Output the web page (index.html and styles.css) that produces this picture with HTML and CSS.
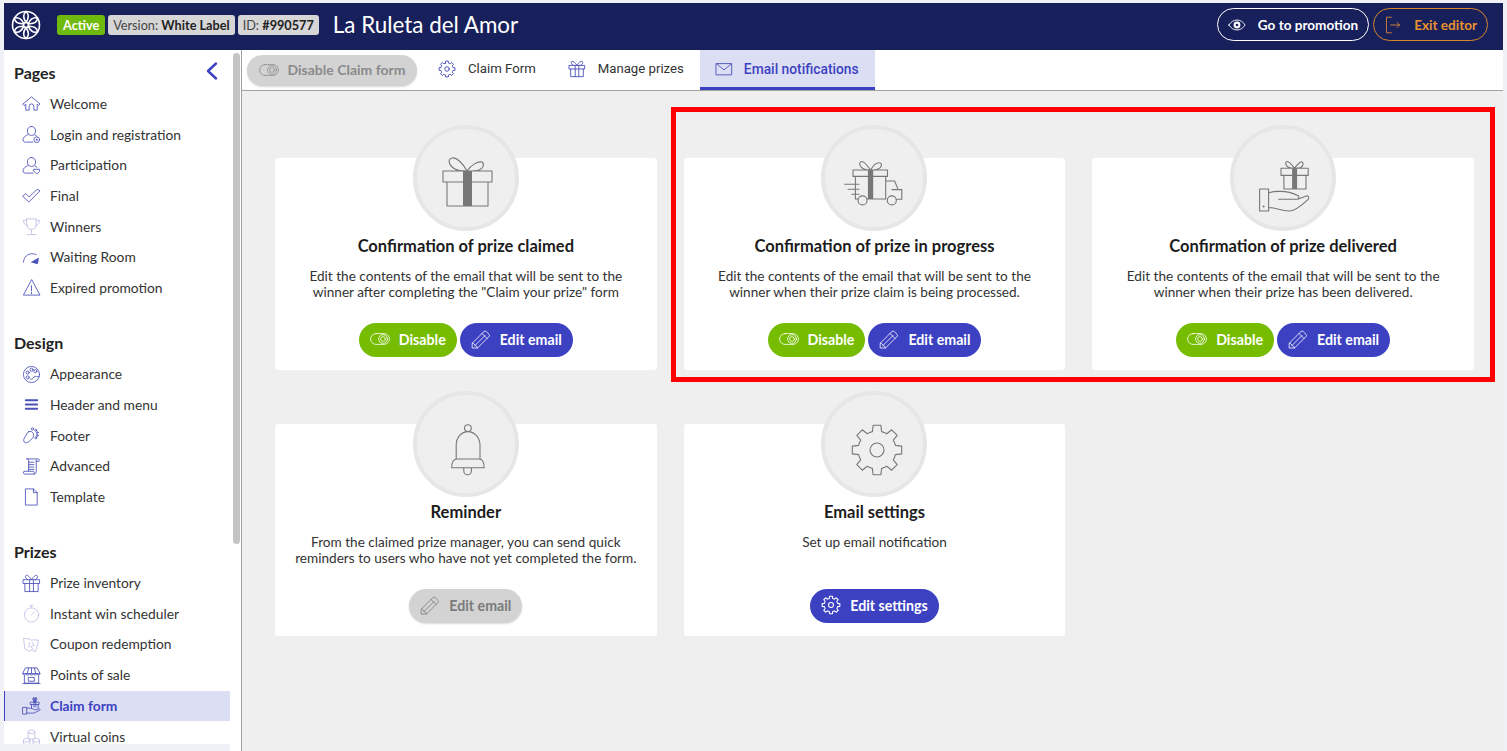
FILE: index.html
```html
<!DOCTYPE html>
<html lang="en">
<head>
  <meta charset="UTF-8">
  <meta name="viewport" content="width=device-width, initial-scale=1.0">
  <title>La Ruleta del Amor</title>
  <link rel="stylesheet" href="styles.css">
</head>
<body>

<!-- shared icons -->
<svg class="icon-defs" aria-hidden="true">
  <symbol id="i-toggle" viewBox="0 0 20 14">
    <rect x="0.6" y="1.6" width="18.8" height="10.8" rx="5.4"/>
    <circle cx="13" cy="7" r="4.4"/>
    <circle cx="13" cy="7" r="2.4"/>
  </symbol>
  <symbol id="i-pencil" viewBox="0 0 20 20">
    <path d="M1.5 14 13 2.5a1.6 1.6 0 0 1 2.2 0l2.8 2.8a1.6 1.6 0 0 1 0 2.2L6.5 19H1.5z"/>
    <path d="M1.5 14c2 0 2 2 2.5 2.5S6.5 17 6.5 19M11 4.5l5 5M4 16.5 14 6.5"/>
  </symbol>
  <symbol id="i-gear" viewBox="-28 -28 56 56">
    <path d="M-4.6 -18.4L-3.9 -24.7L3.9 -24.7L4.6 -18.4A19 19 0 0 1 9.8 -16.3L14.7 -20.2L20.2 -14.7L16.3 -9.8A19 19 0 0 1 18.4 -4.6L24.7 -3.9L24.7 3.9L18.4 4.6A19 19 0 0 1 16.3 9.8L20.2 14.7L14.7 20.2L9.8 16.3A19 19 0 0 1 4.6 18.4L3.9 24.7L-3.9 24.7L-4.6 18.4A19 19 0 0 1 -9.8 16.3L-14.7 20.2L-20.2 14.7L-16.3 9.8A19 19 0 0 1 -18.4 4.6L-24.7 3.9L-24.7 -3.9L-18.4 -4.6A19 19 0 0 1 -16.3 -9.8L-20.2 -14.7L-14.7 -20.2L-9.8 -16.3A19 19 0 0 1 -4.6 -18.4Z"/>
    <circle r="7"/>
  </symbol>
  <symbol id="i-gift" viewBox="0 0 20 20">
    <rect x="1.5" y="6" width="17" height="4"/>
    <path d="M3 10v8.5h14V10M8 6v12.5M12 6v12.5M10 6C8 3 6 1 4.5 1.5 3 2 3.5 5 6 6M10 6c2-3 4-5 5.5-4.5C17 2 16.5 5 14 6"/>
  </symbol>
  <symbol id="i-user" viewBox="0 0 20 20">
    <path d="M10 1.5c2.800 0 4.300 2.200 4.300 4.800 0 2.500-1.500 4.700-4.300 4.700S5.700 8.800 5.700 6.300c0-2.600 1.500-4.800 4.300-4.800zM6.500 10C3.500 11.500 1 13 1 15.500S3 18 5 18h6.500M13.500 10.500c.8.400 1.600.9 2.300 1.500"/>
  </symbol>
</svg>

<div class="layout">
  <header class="topbar">
    <svg class="logo" viewBox="0 0 30 30">
      <circle cx="15" cy="15" r="13.5"/>
      <circle cx="15" cy="15" r="2.5"/>
      <path d="M15 12.5C12 8 12 4 15 1.500c3 2.500 3 6.500 0 11zM17.200 13.700c2.400-4.800 5.800-6.800 9.500-5.500-.7 3.900-4 6-9.500 5.500zM17.200 16.300c5.400-.3 8.800 1.700 9.500 5.500-3.700 1.300-7.100-.7-9.500-5.500zM15 17.500c3 4.500 3 8.500 0 11-3-2.500-3-6.500 0-11zM12.800 16.300c-2.400 4.800-5.800 6.800-9.500 5.500.7-3.800 4.100-5.800 9.500-5.500zM12.800 13.700c-5.500.5-8.800-1.600-9.500-5.500 3.700-1.300 7.100.7 9.500 5.500z"/>
    </svg>
    <span class="badge badge-green">Active</span>
    <span class="badge">Version: <b>White Label</b></span>
    <span class="badge">ID: <b>#990577</b></span>
    <h1 class="promo-title">La Ruleta del Amor</h1>
    <a class="top-btn top-btn-white">
      <svg viewBox="0 0 20 14"><path d="M1 7c2.500-3.800 5.500-5.500 9-5.500S16.500 3.200 19 7c-2.500 3.800-5.500 5.500-9 5.500S3.500 10.800 1 7z"/><circle cx="10" cy="7" r="3.8" class="solid"/><circle cx="10" cy="7" r="1.5" class="hole"/></svg>
      Go to promotion
    </a>
    <a class="top-btn top-btn-orange">
      <svg viewBox="0 0 20 22"><path d="M8 1.500H2v19h6M7 11h11M15 8l3 3-3 3"/></svg>
      Exit editor
    </a>
  </header>

  <div class="below">
    <aside class="sidebar">
      <div class="side-head">
        <h2>Pages</h2>
        <svg class="collapse" viewBox="0 0 12 18"><path d="M10 1.500 2 9l8 7.500"/></svg>
      </div>
      <ul class="side-list">
        <li><svg class="ico" viewBox="0 0 20 20"><path d="M1 10.500 10 3l9 7.500-1.500 1.500-1.500-1.200V17h-3.500v-4a2.500 2.500 0 0 0-5 0v4H4v-6.200L2.500 12z"/></svg>Welcome</li>
        <li><svg class="ico" viewBox="0 0 20 20"><use href="#i-user"/><circle cx="15.5" cy="15.5" r="3"/><circle cx="15.5" cy="15.5" r="1" class="solid"/></svg>Login and registration</li>
        <li><svg class="ico" viewBox="0 0 20 20"><use href="#i-user"/><path d="M12.500 14h6v2l-3 3-3-3z"/></svg>Participation</li>
        <li><svg class="ico" viewBox="0 0 20 20"><path d="M1 10.500 4 8l3.500 3.500L16 3.500l3 1.500L7.500 16.500z"/></svg>Final</li>
        <li><svg class="ico ico-faint" viewBox="0 0 20 20"><path d="M5 2h10v6c0 3-2 5-5 5s-5-2-5-5zM5 3.500H1.500c0 3 1.500 5 4 5.500M15 3.500h3.500c0 3-1.500 5-4 5.500M10 13v4M5.500 18.500h9"/></svg>Winners</li>
        <li><svg class="ico" viewBox="0 0 20 20"><path d="M1.500 15C2 9 6 6 11 6c1.500 0 3 .4 4 1"/><path d="M9 15l9-5-1.500 7z" class="solid"/></svg>Waiting Room</li>
        <li><svg class="ico" viewBox="0 0 20 20"><path d="M10 2 1.500 18h17zM10 8v5.500M10 15v1.500"/></svg>Expired promotion</li>
      </ul>

      <div class="side-head"><h2>Design</h2></div>
      <ul class="side-list">
        <li><svg class="ico" viewBox="0 0 20 20"><circle cx="10" cy="10" r="8.5"/><circle cx="6" cy="8" r="1.6"/><circle cx="10" cy="5" r="1.6"/><circle cx="14" cy="6.5" r="1.6"/><circle cx="6" cy="13" r="1.6"/><path d="M9 15c3 1 3-3 5-3s2 1 4 0"/></svg>Appearance</li>
        <li><svg class="ico ico-heavy" viewBox="0 0 20 20"><path d="M4 5.500h12M4 10h12M4 14.500h12"/></svg>Header and menu</li>
        <li><svg class="ico" viewBox="0 0 20 20"><path d="M7 6c2-1 4 0 5 2 1 3-1 5-3 7s-5 3.500-6.500 2S2 13 3.500 11 5 7 7 6z"/><circle cx="11" cy="3" r="1.2"/><circle cx="14.5" cy="4.5" r="1"/><circle cx="16" cy="7" r="1"/><circle cx="16" cy="10" r="1"/><circle cx="14.5" cy="12.5" r="1"/></svg>Footer</li>
        <li><svg class="ico" viewBox="0 0 20 20"><path d="M5 2h12c1 0 1.500 1 1 2.500h-3M5 2c1 0 2 .5 2 2v11M15 3v12c0 2-1 3-2 3H3c-1.500 0-2-2-1-3h10c1 0 1 1.500 1 3M7 5.500h5.500M7 8h5.500M7 10.500h5.500M7 13h5.500"/></svg>Advanced</li>
        <li><svg class="ico" viewBox="0 0 20 20"><path d="M4 2h8l4 4v13H4zM12 2v4h4"/></svg>Template</li>
      </ul>

      <div class="side-head"><h2>Prizes</h2></div>
      <ul class="side-list">
        <li><svg class="ico" viewBox="0 0 20 20"><use href="#i-gift"/></svg>Prize inventory</li>
        <li><svg class="ico ico-faint" viewBox="0 0 20 20"><circle cx="10" cy="11.5" r="7.5"/><path d="M8.500 1.500h3M10 1.500V4M10 11.500l3-3"/></svg>Instant win scheduler</li>
        <li><svg class="ico ico-faint" viewBox="0 0 20 20"><path d="M2 3.500l7 1 1 1.500 1.500-1 6 .5-3 12-5-2-1.500 1.500L3.500 15zM8 8l-1 5M11 8l2 3-4 1 3 3"/></svg>Coupon redemption</li>
        <li><svg class="ico" viewBox="0 0 20 20"><path d="M4 2h12l3 6H1zM1 8c0 2 3 2 3 0 0 2 4 2 4 0 0 2 4 2 4 0 0 2 4 2 4 0 0 2 3 2 3 0M2.500 10v8h15v-8M1 18.500h18M7 2 5.500 8M10 2v6M13 2l1.500 6M7 12h6v4H7z"/></svg>Points of sale</li>
        <li class="active"><svg class="ico" viewBox="0 0 20 20"><path d="M9 6.500h9v2.500H9zM10 9v4M17 9v4M12.500 1.500v10M14.500 1.500v10M13.500 6.500c-2-2-3-4-1.500-4.500s1.500 2 1.500 4.500zm0 0c2-2 3-4 1.500-4.500s-1.500 2-1.500 4.500z"/><path d="M1 12h4v7H1zM5 13c3-1 5 0 7 1s3 0 6-.5c1 0 1.500 1 .5 1.500l-6 3H5"/></svg>Claim form</li>
        <li><svg class="ico ico-faint" viewBox="0 0 20 20"><ellipse cx="10" cy="5" rx="3.5" ry="2"/><path d="M6.500 5v6c0 2 7 2 7 0V5"/><ellipse cx="5" cy="14" rx="3.5" ry="2"/><path d="M1.500 14v3c0 2 7 2 7 0v-3"/><ellipse cx="15" cy="14" rx="3.5" ry="2"/><path d="M11.500 14v3c0 2 7 2 7 0v-3"/></svg>Virtual coins</li>
      </ul>
    </aside>

    <div class="side-scroll"><div class="side-thumb"></div></div>

    <main class="content">
      <nav class="tabs">
        <span class="tab-toggle"><svg class="btn-ico" viewBox="0 0 20 14"><use href="#i-toggle"/></svg>Disable Claim form</span>
        <a class="tab"><svg class="tab-ico gear-small" viewBox="0 0 56 56"><use href="#i-gear"/></svg>Claim Form</a>
        <a class="tab"><svg class="tab-ico" viewBox="0 0 20 20"><use href="#i-gift"/></svg>Manage prizes</a>
        <a class="tab tab-active"><svg class="tab-ico" viewBox="0 0 20 20"><path d="M1.500 4h17v12.500h-17zM1.500 4 10 11l8.500-7"/></svg>Email notifications</a>
      </nav>

      <section class="cards">
        <article class="card">
          <div class="card-circle">
            <svg viewBox="0 0 60 60">
              <path d="M7 23h49v11H7zM11 34v24h41V34M31 23C26 14 20 9 16 10 11 11 13 18 19 21 22 23 27 23 31 23M31 23C35 17 42 13 46 14 49 16 47 21 43 22 40 23 35 23 31 23"/>
              <path d="M27 23h9v35h-9z" class="solid"/>
            </svg>
          </div>
          <h3>Confirmation of prize claimed</h3>
          <p>Edit the contents of the email that will be sent to the winner after completing the "Claim your prize" form</p>
          <div class="card-actions">
            <a class="btn btn-green"><svg class="btn-ico" viewBox="0 0 20 14"><use href="#i-toggle"/></svg>Disable</a>
            <a class="btn btn-blue"><svg class="btn-ico" viewBox="0 0 20 20"><use href="#i-pencil"/></svg>Edit email</a>
          </div>
        </article>

        <article class="card">
          <div class="card-circle">
            <svg viewBox="0 0 60 60">
              <path d="M9 22h34.500v6.400H9zM11.400 28.400V51M41.700 28.400V51M14 51h-2.600M23 51h18.700M41.700 33H50.600L54.200 41.600H57.800V51.300H52.500M26.500 22C23 17 20 13 17.500 13.500 14 14.500 16 19.500 20 21 22 22 24 22 26.500 22M26.500 22C29 18 33 14 36 15 39 16 37 20 34 21 32 22 29 22 26.500 22M.6 36.300H15M4 41.300H15M7.800 46.300H15M48 41.600H54.200"/>
              <path d="M23.900 22h5.300v29h-5.300z" class="solid"/>
              <circle cx="18.5" cy="52.4" r="4.5"/>
              <circle cx="47.8" cy="52.4" r="4.5"/>
            </svg>
          </div>
          <h3>Confirmation of prize in progress</h3>
          <p>Edit the contents of the email that will be sent to the winner when their prize claim is being processed.</p>
          <div class="card-actions">
            <a class="btn btn-green"><svg class="btn-ico" viewBox="0 0 20 14"><use href="#i-toggle"/></svg>Disable</a>
            <a class="btn btn-blue"><svg class="btn-ico" viewBox="0 0 20 20"><use href="#i-pencil"/></svg>Edit email</a>
          </div>
        </article>

        <article class="card">
          <div class="card-circle">
            <svg viewBox="0 0 60 60">
              <path d="M28 20.200h27.200v7.200H28zM30.900 27.400V41H53V27.400M41.500 20.200C39 17 36 13 34 13.500 31.500 14.500 33 18.500 36 19.500 38 20.200 40 20.200 41.500 20.200M41.500 20.200C44 17 47 13 49 14 51 15 50 18.500 47.500 19.500 45.500 20.200 43 20.200 41.500 20.200M6.600 41h9v22h-9zM15.600 45C20 43 24 43.400 27.400 43.400 33 43.400 40 45 45.200 47.700 46.500 49 45.500 51.300 44.500 51.300H25.600M44.500 51.300 54.100 47.700C56 47.700 56 50 55.200 51.300 48 58 42 63 36.300 63 28 63 22 59.500 15.600 59.500"/>
              <path d="M39.100 20.200h5v20.800h-5z" class="solid"/>
              <circle cx="10.6" cy="58.4" r="1" class="solid"/>
            </svg>
          </div>
          <h3>Confirmation of prize delivered</h3>
          <p>Edit the contents of the email that will be sent to the winner when their prize has been delivered.</p>
          <div class="card-actions">
            <a class="btn btn-green"><svg class="btn-ico" viewBox="0 0 20 14"><use href="#i-toggle"/></svg>Disable</a>
            <a class="btn btn-blue"><svg class="btn-ico" viewBox="0 0 20 20"><use href="#i-pencil"/></svg>Edit email</a>
          </div>
        </article>

        <article class="card">
          <div class="card-circle">
            <svg viewBox="0 0 60 60">
              <circle cx="31.9" cy="14.1" r="3.4"/>
              <path d="M20.200 45V31.300C20.200 24 25 17.600 31.900 17.600S44 24 44 31.300V45M20.200 45C17 45.800 15.700 48 15.700 53.800H48.100C48.100 48 47 45.800 44 45zM27.800 53.800V57a3.800 3.800 0 0 0 7.600 0v-3.200"/>
            </svg>
          </div>
          <h3>Reminder</h3>
          <p>From the claimed prize manager, you can send quick reminders to users who have not yet completed the form.</p>
          <div class="card-actions">
            <a class="btn btn-gray"><svg class="btn-ico" viewBox="0 0 20 20"><use href="#i-pencil"/></svg>Edit email</a>
          </div>
        </article>

        <article class="card">
          <div class="card-circle">
            <svg class="gear-big" viewBox="0 0 56 56"><use href="#i-gear"/></svg>
          </div>
          <h3>Email settings</h3>
          <p>Set up email notification</p>
          <div class="card-actions">
            <a class="btn btn-blue"><svg class="btn-ico gear-small" viewBox="0 0 56 56"><use href="#i-gear"/></svg>Edit settings</a>
          </div>
        </article>
      </section>

      <div class="highlight"></div>
    </main>
  </div>
</div>

</body>
</html>
```

FILE: styles.css
```css
* {
  box-sizing: border-box;
}

html, body {
  height: 100%;
}

body {
  font-family: Lato, "Noto Sans", sans-serif;
  background-color: #eff1f6;
  color: #2b2b2b;
  margin: 0;
  overflow: hidden;
}

svg {
  fill: none;
  stroke: currentColor;
  stroke-linejoin: round;
  stroke-linecap: round;
  flex-shrink: 0;
}

svg .solid {
  fill: currentColor;
  stroke: none;
}

.icon-defs {
  position: absolute;
  width: 0;
  height: 0;
}

.layout {
  height: 100%;
  padding: 3px 4px 0;
  display: flex;
  flex-direction: column;
}

/* top bar */
.topbar {
  height: 47px;
  background-color: #18205c;
  color: #fff;
  display: flex;
  align-items: center;
  padding: 0 15px 4px 7px;
  flex-shrink: 0;
}

.logo {
  width: 30px;
  height: 30px;
  margin-right: 16px;
  stroke-width: 1.6;
}

.badge {
  height: 20px;
  line-height: 20px;
  padding: 0 5px;
  margin-right: 3px;
  border-radius: 3px;
  background-color: #d6d6d6;
  color: #444;
  font-size: 12.7px;
}

.badge b {
  color: #222;
}

.badge-green {
  background-color: #6fba0c;
  color: #fff;
  font-weight: 700;
  padding: 0 6px;
}

.promo-title {
  margin: 0 auto 0 11px;
  font-size: 22.4px;
  font-weight: 400;
}

.top-btn {
  height: 33px;
  border-radius: 17px;
  border: 1px solid #fff;
  display: flex;
  align-items: center;
  font-size: 13.55px;
  font-weight: 700;
  padding: 0 10px;
}

.top-btn svg {
  width: 18px;
  height: 18px;
  margin-right: 12px;
}

.top-btn .hole {
  fill: #18205c;
  stroke: none;
}

.top-btn-white {
  color: #fff;
  margin-right: 4px;
}

.top-btn-white svg .solid {
  fill: #fff;
}

.top-btn-orange {
  color: #e8912f;
  border-color: #d5862c;
}

.below {
  flex: 1;
  display: flex;
  min-height: 0;
}

/* left menu */
.sidebar {
  width: 226px;
  height: 694px;
  padding-top: 8.5px;
  background-color: #fff;
  overflow: hidden;
  flex-shrink: 0;
}

.side-head {
  height: 30px;
  padding: 0 12px 2px 10px;
  display: flex;
  align-items: center;
  justify-content: space-between;
}

.side-head h2 {
  margin: 0;
  font-size: 16px;
  font-weight: 700;
  color: #222;
}

.collapse {
  width: 12px;
  height: 18px;
  margin-bottom: 4px;
  color: #3c41c2;
  stroke-width: 2.4;
}

.side-list {
  list-style: none;
  margin: 0 0 25.5px;
  padding: 0;
}

.side-list li {
  height: 30.7px;
  line-height: 14px;
  display: flex;
  align-items: center;
  padding-left: 18px;
  font-size: 13.8px;
  color: #333;
}

.side-list li.active {
  background-color: #dcdff3;
  border-left: 1px solid #3c41c2;
  padding-left: 17px;
  color: #3c41c2;
  font-weight: 700;
}

.ico {
  width: 19px;
  height: 19px;
  margin-right: 9px;
  color: #4a50b8;
  stroke-width: 0.9;
}

.ico-faint {
  opacity: 0.35;
}

.ico-heavy {
  stroke-width: 2;
}

.side-scroll {
  width: 11px;
  flex-shrink: 0;
  background-color: #fff;
  padding: 3px 1px 0 3px;
}

.side-thumb {
  height: 491px;
  background-color: #c4c4c4;
  border-radius: 4px;
}

/* main area */
.content {
  flex: 1;
  position: relative;
  background-color: #efefef;
  border-left: 1px solid #a0a0a0;
  min-width: 0;
}

.tabs {
  height: 41px;
  background-color: #fff;
  border-bottom: 1px solid #a0a0a0;
  display: flex;
  align-items: stretch;
  padding-left: 5px;
}

.tab-toggle {
  width: 170px;
  height: 31px;
  margin: 5px 5px 0 0;
  padding-bottom: 2px;
  border-radius: 16px;
  background-color: #d3d3d3;
  color: #8a8a8a;
  box-shadow: 0 1px 2px rgba(0, 0, 0, 0.15);
  display: flex;
  align-items: center;
  justify-content: center;
  font-size: 14px;
  font-weight: 700;
}

.tab-toggle .btn-ico {
  margin-right: 9px;
}

.tab {
  display: flex;
  align-items: center;
  padding: 0 16px 3px;
  font-family: Roboto, sans-serif;
  font-size: 13.2px;
  color: #333;
}

.tab-ico {
  width: 18px;
  height: 18px;
  margin-right: 12px;
  color: #4a50b8;
  stroke-width: 1;
}

.tab-active {
  background-color: #dcdff3;
  border-bottom: 3px solid #3c41c2;
  padding: 0 16px 0 15px;
  color: #3c41c2;
  font-size: 13.8px;
  font-weight: 500;
}

.tab-active .tab-ico {
  margin-right: 11px;
}

.cards {
  display: grid;
  grid-template-columns: repeat(3, 1fr);
  grid-auto-rows: 212px;
  gap: 54px 27px;
  padding: 67px 29px 0 33px;
}

.card {
  background-color: #fff;
  border-radius: 3px;
  padding: 0 13px 13px;
  display: flex;
  flex-direction: column;
  align-items: center;
  text-align: center;
}

.card-circle {
  width: 106px;
  height: 106px;
  margin-top: -33px;
  border-radius: 50%;
  border: 4px solid #e5e6e8;
  background-color: #efefef;
  color: #777;
  display: flex;
  align-items: center;
  justify-content: center;
  flex-shrink: 0;
}

.card-circle svg {
  width: 60px;
  height: 60px;
  stroke-width: 1.1;
  overflow: visible;
}

.card-circle .gear-big {
  width: 56px;
  height: 56px;
  margin: 11px 0 0 5px;
}

.card h3 {
  margin: 5px 0 0;
  font-size: 16.5px;
  line-height: 20px;
  font-weight: 700;
  color: #1c1c1c;
}

.card p {
  margin: 12px 0 0;
  max-width: 345px;
  font-size: 13.6px;
  line-height: 16px;
  color: #333;
}

.card-actions {
  margin-top: auto;
  display: flex;
  gap: 3px;
}

.btn {
  height: 34px;
  border-radius: 17px;
  padding: 0 11px 2px;
  display: flex;
  align-items: center;
  font-size: 14.2px;
  font-weight: 700;
  color: #fff;
}

.btn-ico {
  width: 20px;
  height: 20px;
  margin-right: 9px;
  stroke-width: 0.8;
}

/* the gear symbol has a 56 unit box, so small copies need a thicker stroke */
.btn-ico.gear-small,
.tab-ico.gear-small {
  stroke-width: 3;
}

.btn-green {
  background-color: #76bc00;
}

.btn-blue {
  background-color: #3c41c2;
}

.btn-gray {
  background-color: #d3d3d3;
  color: #7a7a7a;
  box-shadow: 0 1px 2px rgba(0, 0, 0, 0.15);
}

/* red frame drawn over the three delivery cards */
.highlight {
  position: absolute;
  left: 429px;
  top: 57px;
  width: 824px;
  height: 275px;
  border: 5px solid #f00;
  pointer-events: none;
}
```
